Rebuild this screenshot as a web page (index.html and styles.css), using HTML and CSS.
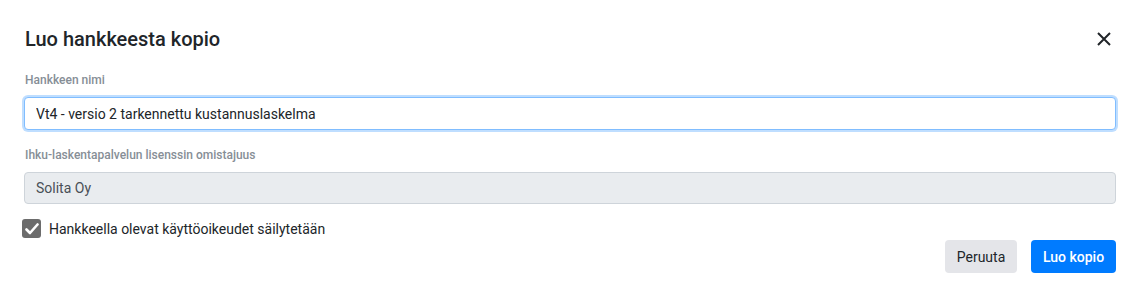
FILE: index.html
```html
<!DOCTYPE html>
<html lang="fi">
<head>
<meta charset="utf-8">
<link rel="stylesheet" href="styles.css">
</head>
<body>
<div class="modal">
  <div class="modal-header">
    <h5 class="modal-title">Luo hankkeesta kopio</h5>
    <button class="close" aria-label="Sulje">
      <svg width="14" height="14" viewBox="0 0 14 14"><path d="M1 1L13 13M13 1L1 13" stroke="#212529" stroke-width="2" fill="none"/></svg>
    </button>
  </div>
  <div class="modal-body">
    <div class="form-group">
      <label class="form-label">Hankkeen nimi</label>
      <input class="form-control focus" type="text" value="Vt4 - versio 2 tarkennettu kustannuslaskelma">
    </div>
    <div class="form-group">
      <label class="form-label">Ihku-laskentapalvelun lisenssin omistajuus</label>
      <input class="form-control" type="text" value="Solita Oy" disabled>
    </div>
    <label class="check">
      <span class="check-box">
        <svg width="14" height="12" viewBox="0 0 14 12"><path d="M1.5 6.5L5 10L12.5 1.5" stroke="#fff" stroke-width="2.6" fill="none" stroke-linecap="round" stroke-linejoin="round"/></svg>
      </span>
      <span>Hankkeella olevat käyttöoikeudet säilytetään</span>
    </label>
  </div>
  <div class="modal-footer">
    <button class="btn btn-secondary">Peruuta</button>
    <button class="btn btn-primary">Luo kopio</button>
  </div>
</div>
</body>
</html>
```
FILE: styles.css
```css
* { box-sizing: border-box; }
html, body { margin: 0; background: #fff; }
body { font-family: Roboto, "Noto Sans", sans-serif; color: #212529; }
.modal {
  width: 1139px;
  height: 296px;
  background: #fff;
  border-radius: 4px;
  padding: 0 23px 0 24px;
}
.modal-header {
  display: flex;
  justify-content: space-between;
  align-items: center;
  padding-top: 27px;
}
.modal-title {
  margin: 0 0 0 1px;
  font-size: 20px;
  font-weight: 500;
  line-height: 24px;
  color: #212529;
}
.close {
  border: 0;
  background: none;
  padding: 0;
  margin-right: 5px;
  width: 14px;
  height: 14px;
  display: flex;
}
.modal-body { padding-top: 21px; }
.form-group { display: flex; flex-direction: column; margin-bottom: 17px; }
.form-label {
  font-size: 12px;
  font-weight: 500;
  color: #868e96;
  line-height: 16px;
  margin: 0 0 9px 1px;
}
.form-control {
  height: 33px;
  font-family: inherit;
  font-size: 14px;
  color: #212529;
  padding: 0 11px;
  border: 1px solid #ced4da;
  border-radius: 4px;
  background: #fff;
  width: 100%;
  outline: none;
}
.form-control.focus {
  border-color: #80bdff;
  box-shadow: 0 0 0 2px rgba(0,123,255,.25);
}
.form-control:disabled {
  background: #e9ecef;
  color: #495057;
  height: 32px;
}
.check {
  display: flex;
  align-items: center;
  gap: 8px;
  font-size: 14px;
  color: #212529;
  margin-top: -2px;
  margin-left: -2px;
}
.check-box {
  width: 19px;
  height: 19px;
  border-radius: 3px;
  background: #6c6c6c;
  display: flex;
  align-items: center;
  justify-content: center;
}
.modal-footer {
  display: flex;
  justify-content: flex-end;
  gap: 14px;
  margin-top: 2px;
}
.btn {
  height: 33px;
  border: 0;
  border-radius: 4px;
  font-family: inherit;
  font-size: 14px;
  padding: 0 11px;
}
.btn-secondary { background: #e4e5e9; color: #212529; width: 72px; }
.btn-primary { background: #007bff; color: #fff; font-weight: 500; width: 85px; }
```
